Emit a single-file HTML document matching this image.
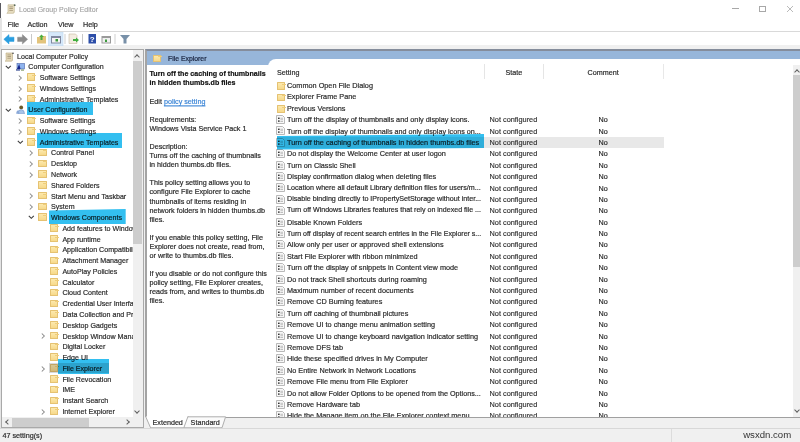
<!DOCTYPE html>
<html><head><meta charset="utf-8">
<style>
*{margin:0;padding:0;box-sizing:border-box}
html,body{width:800px;height:442px;overflow:hidden;background:#f0f0f0;font-family:"Liberation Sans",sans-serif;color:#222;position:relative}
.a{position:absolute}
.t{position:absolute;white-space:nowrap;font-size:7.2px;line-height:9px;color:#2a2a2a;-webkit-text-stroke:0.18px #2a2a2a;transform:scaleY(1.1)}
#top{left:0;top:0;width:800px;height:45px;background:#fff}
#edge{left:0;top:2.5px;width:1.4px;height:15px;background:#5a5a60}
#sep1{left:0;top:31px;width:800px;height:1px;background:#d9d9d9}
#lp{left:1px;top:49px;width:143px;height:379px;background:#fff;border:1px solid #a9a9a9;overflow:hidden}
#rp{left:145px;top:49px;width:655px;height:368px;background:#fff;border-left:2px solid #a4a4a4;border-top:2px solid #858d9c}
#band{left:147px;top:51px;width:653px;height:14px;background:#97b6da}
#tab{left:268px;top:59px;width:532px;height:10px;background:#fff;border-top-left-radius:8px}
.hl{position:absolute;background:#33bff0;mix-blend-mode:multiply}
.fold{position:absolute;width:8.5px;height:7.5px;background:linear-gradient(#fce9ae,#f7d98a);border:0.5px solid #e5c272;border-radius:0.5px}
.fold::before{content:"";position:absolute;left:4px;top:0.6px;width:4px;height:0.8px;background:#efcd7a}
.chev{position:absolute;width:4px;height:4px;border-right:1px solid #9a9a9a;border-bottom:1px solid #9a9a9a}
.ce{transform:rotate(-45deg)}
.cd{transform:rotate(45deg)}
.doc{position:absolute;width:7px;height:9px;border:1px solid #999;background:#f7f7f7}
.pol{position:absolute;width:7px;height:9px;background:#e8dcc0;border:1px solid #b9a982}
.comp{position:absolute;width:9px;height:8px;background:#3a5fb0}
.usr{position:absolute;width:9px;height:9px;background:#7c8fb0;border-radius:3px}
#status{left:0;top:428px;width:800px;height:14px;background:#f0f0f0;border-top:1px solid #d8d8d8}
#treeclip{left:2px;top:50px;width:130.5px;height:366px;overflow:hidden}
</style></head><body>
<div id="top" class="a"></div>
<div id="edge" class="a"></div>
<div id="sep1" class="a"></div>
<!-- title -->
<div class="a" style="left:0;top:17.5px;width:1.5px;height:410px;background:#e4e4e4"></div>
<svg class="a" style="left:6px;top:3.5px" width="10" height="10" viewBox="0 0 10 10"><path d="M2 0.8 H8.3 V8 Q8.3 9.3 7 9.3 H0.8 Q2 8.6 2 7.5 Z" fill="#e6dcc0" stroke="#bcae88" stroke-width="0.6"/><rect x="3.3" y="2.5" width="3.6" height="0.8" fill="#a09070"/><rect x="3.3" y="4.2" width="3.6" height="0.8" fill="#a09070"/><rect x="3.3" y="5.9" width="3.6" height="0.8" fill="#a09070"/><circle cx="8.7" cy="1.2" r="0.9" fill="#5a6a5a"/></svg>
<div class="t" style="left:19px;top:4.7px;color:#a0a0a0;-webkit-text-stroke:0.1px #a0a0a0;font-size:7px">Local Group Policy Editor</div>
<div class="a" style="left:732px;top:8.2px;width:7px;height:0.8px;background:#a8a8a8"></div>
<div class="a" style="left:759px;top:6px;width:6.5px;height:6px;border:0.8px solid #a8a8a8"></div>
<svg class="a" style="left:786px;top:5px" width="8" height="8" viewBox="0 0 8 8"><path d="M1 1 L7 7 M7 1 L1 7" stroke="#a8a8a8" stroke-width="0.8"/></svg>
<!-- menu -->
<div class="t" style="left:7.5px;top:20px">File</div>
<div class="t" style="left:27.5px;top:20px">Action</div>
<div class="t" style="left:58px;top:20px">View</div>
<div class="t" style="left:83px;top:20px">Help</div>


<!-- toolbar -->
<svg class="a" style="left:0;top:32px" width="140" height="14" viewBox="0 0 140 14">
 <path d="M3.8 7.3 L9 2.6 V5.2 H14 V9.4 H9 V12 Z" fill="#2a9ee0" stroke="#2a9ee0" stroke-width="0.5" stroke-linejoin="round"/>
 <path d="M27.6 7.3 L22.4 2.6 V5.2 H17.6 V9.4 H22.4 V12 Z" fill="#8c8c8c" stroke="#8c8c8c" stroke-width="0.5" stroke-linejoin="round"/>
 <rect x="31" y="2" width="1" height="10" fill="#c8c8c8"/>
 <path d="M37 5 H41 L42 4 H46 V11.5 H37 Z" fill="#e3c47c"/>
 <path d="M41.5 2.5 L44 5 H42.5 V8 H40.5 V5 H39 Z" fill="#4cae3c"/>
 <rect x="48.5" y="0.3" width="14.5" height="13.5" fill="#d6e8fa" stroke="#c0daf2" stroke-width="0.6"/>
 <rect x="51" y="4" width="10" height="7.5" fill="#8088a0"/>
 <rect x="52" y="6" width="8" height="4.5" fill="#f4f4f4"/>
 <rect x="55.5" y="7" width="2.5" height="2.5" fill="#3a9a3a"/>
 <rect x="64.5" y="2" width="1" height="10" fill="#d0d0d0"/>
 <path d="M69 2 H75.5 L77 3.5 V11.5 H69 Z" fill="#f3ece0" stroke="#c8b8a0" stroke-width="0.6"/>
 <path d="M73 7 H76 V5.5 L79 8 L76 10.5 V9 H73 Z" fill="#3fb03f"/>
 <rect x="82" y="2" width="1" height="10" fill="#c8c8c8"/>
 <rect x="88.5" y="2" width="7.5" height="9.5" fill="#2d4ea8"/>
 <text x="92.2" y="9.6" font-size="8" font-family="Liberation Sans" font-weight="bold" fill="#fff" text-anchor="middle">?</text>
 <rect x="101.5" y="4" width="9.5" height="7.5" fill="#9a9a9a"/>
 <rect x="102.5" y="6" width="7.5" height="4.5" fill="#f0f0f0"/>
 <rect x="105" y="7.5" width="2" height="2.5" fill="#3a9a3a"/>
 <rect x="114.5" y="2" width="1" height="10" fill="#d0d0d0"/>
 <path d="M120 3 H130 L126.5 7 V11.5 H123.5 V7 Z" fill="#7890a8"/>
</svg>
<div id="lp" class="a"></div>
<div id="treeclip" class="a">
<div class="a" style="left:-2px;top:-50px">
<svg class="a" style="left:4px;top:51.8px" width="10" height="10" viewBox="0 0 10 10"><path d="M2 1 H8.5 V8 Q8.5 9.2 7.3 9.2 H1.2 Q2.2 8.6 2.2 7.5 Z" fill="#e4d8b8" stroke="#b8a880" stroke-width="0.6"/><rect x="3.4" y="2.6" width="3.6" height="0.7" fill="#9a8a6a"/><rect x="3.4" y="4.2" width="3.6" height="0.7" fill="#9a8a6a"/><rect x="3.4" y="5.8" width="3.6" height="0.7" fill="#9a8a6a"/><circle cx="9" cy="1.2" r="0.8" fill="#444"/></svg>
<div class="t" style="left:17.00px;top:52.50px;font-size:7.1px">Local Computer Policy</div>
<svg class="a" style="left:5.35px;top:64.57px" width="7" height="5" viewBox="0 0 7 5"><path d="M0.8 0.8 L3.3 3.3 L5.8 0.8" fill="none" stroke="#3c3c3c" stroke-width="1.1"/></svg>
<svg class="a" style="left:16px;top:62.57px" width="9" height="8" viewBox="0 0 9 8"><rect x="1" y="0.5" width="7.5" height="5.5" fill="#8fb4ee" stroke="#4a64a8" stroke-width="0.6"/><path d="M1 6 L3.2 1 L4.5 6 Z" fill="#14248a"/><rect x="0" y="6" width="4" height="1.8" fill="#6a7ab0"/><rect x="5" y="6.5" width="3" height="1.2" fill="#8aa070"/></svg>
<div class="t" style="left:28.35px;top:63.27px;font-size:7.1px">Computer Configuration</div>
<svg class="a" style="left:18.10px;top:74.74px" width="5" height="7" viewBox="0 0 5 7"><path d="M0.8 0.5 L3.3 3 L0.8 5.5" fill="none" stroke="#888" stroke-width="1.05"/></svg>
<div class="fold" style="left:26.80px;top:73.44px"></div>
<div class="t" style="left:39.70px;top:74.04px;font-size:7.1px">Software Settings</div>
<svg class="a" style="left:18.10px;top:85.51px" width="5" height="7" viewBox="0 0 5 7"><path d="M0.8 0.5 L3.3 3 L0.8 5.5" fill="none" stroke="#888" stroke-width="1.05"/></svg>
<div class="fold" style="left:26.80px;top:84.21px"></div>
<div class="t" style="left:39.70px;top:84.81px;font-size:7.1px">Windows Settings</div>
<svg class="a" style="left:18.10px;top:96.28px" width="5" height="7" viewBox="0 0 5 7"><path d="M0.8 0.5 L3.3 3 L0.8 5.5" fill="none" stroke="#888" stroke-width="1.05"/></svg>
<div class="fold" style="left:26.80px;top:94.98px"></div>
<div class="t" style="left:39.70px;top:95.58px;font-size:7.1px">Administrative Templates</div>
<svg class="a" style="left:5.35px;top:107.65px" width="7" height="5" viewBox="0 0 7 5"><path d="M0.8 0.8 L3.3 3.3 L5.8 0.8" fill="none" stroke="#3c3c3c" stroke-width="1.1"/></svg>
<svg class="a" style="left:16px;top:105.25px" width="9" height="9" viewBox="0 0 9 9"><circle cx="5.2" cy="2.4" r="1.9" fill="#6a5a2a"/><path d="M2 8.8 Q2 4.8 5.2 4.6 Q8.5 4.8 8.5 8.8 Z" fill="#a8c4e8" stroke="#6a8ac0" stroke-width="0.5"/><path d="M0.2 8.8 Q0.2 5.5 2.6 5.2 L3.6 8.8 Z" fill="#8aa8d8"/></svg>
<div class="t" style="left:28.35px;top:106.35px;font-size:7.1px">User Configuration</div>
<svg class="a" style="left:18.10px;top:117.82px" width="5" height="7" viewBox="0 0 5 7"><path d="M0.8 0.5 L3.3 3 L0.8 5.5" fill="none" stroke="#888" stroke-width="1.05"/></svg>
<div class="fold" style="left:26.80px;top:116.52px"></div>
<div class="t" style="left:39.70px;top:117.12px;font-size:7.1px">Software Settings</div>
<svg class="a" style="left:18.10px;top:128.59px" width="5" height="7" viewBox="0 0 5 7"><path d="M0.8 0.5 L3.3 3 L0.8 5.5" fill="none" stroke="#888" stroke-width="1.05"/></svg>
<div class="fold" style="left:26.80px;top:127.29px"></div>
<div class="t" style="left:39.70px;top:127.89px;font-size:7.1px">Windows Settings</div>
<svg class="a" style="left:16.70px;top:139.96px" width="7" height="5" viewBox="0 0 7 5"><path d="M0.8 0.8 L3.3 3.3 L5.8 0.8" fill="none" stroke="#3c3c3c" stroke-width="1.1"/></svg>
<div class="fold" style="left:26.80px;top:138.06px"></div>
<div class="t" style="left:39.70px;top:138.66px;font-size:7.1px">Administrative Templates</div>
<svg class="a" style="left:29.45px;top:150.13px" width="5" height="7" viewBox="0 0 5 7"><path d="M0.8 0.5 L3.3 3 L0.8 5.5" fill="none" stroke="#888" stroke-width="1.05"/></svg>
<div class="fold" style="left:38.15px;top:148.83px"></div>
<div class="t" style="left:51.05px;top:149.43px;font-size:7.1px">Control Panel</div>
<svg class="a" style="left:29.45px;top:160.90px" width="5" height="7" viewBox="0 0 5 7"><path d="M0.8 0.5 L3.3 3 L0.8 5.5" fill="none" stroke="#888" stroke-width="1.05"/></svg>
<div class="fold" style="left:38.15px;top:159.60px"></div>
<div class="t" style="left:51.05px;top:160.20px;font-size:7.1px">Desktop</div>
<svg class="a" style="left:29.45px;top:171.67px" width="5" height="7" viewBox="0 0 5 7"><path d="M0.8 0.5 L3.3 3 L0.8 5.5" fill="none" stroke="#888" stroke-width="1.05"/></svg>
<div class="fold" style="left:38.15px;top:170.37px"></div>
<div class="t" style="left:51.05px;top:170.97px;font-size:7.1px">Network</div>
<div class="fold" style="left:38.15px;top:181.14px"></div>
<div class="t" style="left:51.05px;top:181.74px;font-size:7.1px">Shared Folders</div>
<svg class="a" style="left:29.45px;top:193.21px" width="5" height="7" viewBox="0 0 5 7"><path d="M0.8 0.5 L3.3 3 L0.8 5.5" fill="none" stroke="#888" stroke-width="1.05"/></svg>
<div class="fold" style="left:38.15px;top:191.91px"></div>
<div class="t" style="left:51.05px;top:192.51px;font-size:7.1px">Start Menu and Taskbar</div>
<svg class="a" style="left:29.45px;top:203.98px" width="5" height="7" viewBox="0 0 5 7"><path d="M0.8 0.5 L3.3 3 L0.8 5.5" fill="none" stroke="#888" stroke-width="1.05"/></svg>
<div class="fold" style="left:38.15px;top:202.68px"></div>
<div class="t" style="left:51.05px;top:203.28px;font-size:7.1px">System</div>
<svg class="a" style="left:28.05px;top:215.35px" width="7" height="5" viewBox="0 0 7 5"><path d="M0.8 0.8 L3.3 3.3 L5.8 0.8" fill="none" stroke="#3c3c3c" stroke-width="1.1"/></svg>
<div class="fold" style="left:38.15px;top:213.45px"></div>
<div class="t" style="left:51.05px;top:214.05px;font-size:7.1px">Windows Components</div>
<div class="fold" style="left:49.50px;top:224.22px"></div>
<div class="t" style="left:62.40px;top:224.82px;font-size:7.1px">Add features to Windows 10</div>
<div class="fold" style="left:49.50px;top:234.99px"></div>
<div class="t" style="left:62.40px;top:235.59px;font-size:7.1px">App runtime</div>
<div class="fold" style="left:49.50px;top:245.76px"></div>
<div class="t" style="left:62.40px;top:246.36px;font-size:7.1px">Application Compatibility</div>
<div class="fold" style="left:49.50px;top:256.53px"></div>
<div class="t" style="left:62.40px;top:257.13px;font-size:7.1px">Attachment Manager</div>
<div class="fold" style="left:49.50px;top:267.30px"></div>
<div class="t" style="left:62.40px;top:267.90px;font-size:7.1px">AutoPlay Policies</div>
<div class="fold" style="left:49.50px;top:278.07px"></div>
<div class="t" style="left:62.40px;top:278.67px;font-size:7.1px">Calculator</div>
<div class="fold" style="left:49.50px;top:288.84px"></div>
<div class="t" style="left:62.40px;top:289.44px;font-size:7.1px">Cloud Content</div>
<div class="fold" style="left:49.50px;top:299.61px"></div>
<div class="t" style="left:62.40px;top:300.21px;font-size:7.1px">Credential User Interface</div>
<div class="fold" style="left:49.50px;top:310.38px"></div>
<div class="t" style="left:62.40px;top:310.98px;font-size:7.1px">Data Collection and Preview Builds</div>
<div class="fold" style="left:49.50px;top:321.15px"></div>
<div class="t" style="left:62.40px;top:321.75px;font-size:7.1px">Desktop Gadgets</div>
<svg class="a" style="left:40.80px;top:333.22px" width="5" height="7" viewBox="0 0 5 7"><path d="M0.8 0.5 L3.3 3 L0.8 5.5" fill="none" stroke="#888" stroke-width="1.05"/></svg>
<div class="fold" style="left:49.50px;top:331.92px"></div>
<div class="t" style="left:62.40px;top:332.52px;font-size:7.1px">Desktop Window Manager</div>
<div class="fold" style="left:49.50px;top:342.69px"></div>
<div class="t" style="left:62.40px;top:343.29px;font-size:7.1px">Digital Locker</div>
<div class="fold" style="left:49.50px;top:353.46px"></div>
<div class="t" style="left:62.40px;top:354.06px;font-size:7.1px">Edge UI</div>
<svg class="a" style="left:40.80px;top:365.53px" width="5" height="7" viewBox="0 0 5 7"><path d="M0.8 0.5 L3.3 3 L0.8 5.5" fill="none" stroke="#888" stroke-width="1.05"/></svg>
<div class="fold" style="left:49.50px;top:364.23px"></div>
<div class="t" style="left:62.40px;top:364.83px;font-size:7.1px">File Explorer</div>
<div class="fold" style="left:49.50px;top:375.00px"></div>
<div class="t" style="left:62.40px;top:375.60px;font-size:7.1px">File Revocation</div>
<div class="fold" style="left:49.50px;top:385.77px"></div>
<div class="t" style="left:62.40px;top:386.37px;font-size:7.1px">IME</div>
<div class="fold" style="left:49.50px;top:396.54px"></div>
<div class="t" style="left:62.40px;top:397.14px;font-size:7.1px">Instant Search</div>
<svg class="a" style="left:40.80px;top:408.61px" width="5" height="7" viewBox="0 0 5 7"><path d="M0.8 0.5 L3.3 3 L0.8 5.5" fill="none" stroke="#888" stroke-width="1.05"/></svg>
<div class="fold" style="left:49.50px;top:407.31px"></div>
<div class="t" style="left:62.40px;top:407.91px;font-size:7.1px">Internet Explorer</div>
</div>
</div>
<div id="rp" class="a"></div>
<div id="band" class="a"></div>
<div id="tab" class="a"></div>
<div class="fold" style="left:152.5px;top:54.5px"></div>
<div class="t" style="left:168px;top:53.6px;font-size:6.85px;color:#1a2540;-webkit-text-stroke:0.2px #1a2540">File Explorer</div>
<div class="t" style="left:149.5px;top:69.60px;font-weight:bold;font-size:7.1px;color:#111;-webkit-text-stroke-color:#111">Turn off the caching of thumbnails</div>
<div class="t" style="left:149.5px;top:78.66px;font-weight:bold;font-size:7.1px;color:#111;-webkit-text-stroke-color:#111">in hidden thumbs.db files</div>
<div class="t" style="left:149.5px;top:97.08px">Edit <span style="color:#3a84d6;-webkit-text-stroke-color:#3a84d6;text-decoration:underline">policy setting</span></div>
<div class="t" style="left:149.5px;top:115.00px">Requirements:</div>
<div class="t" style="left:149.5px;top:124.06px">Windows Vista Service Pack 1</div>
<div class="t" style="left:149.5px;top:142.18px">Description:</div>
<div class="t" style="left:149.5px;top:151.24px">Turns off the caching of thumbnails</div>
<div class="t" style="left:149.5px;top:160.30px">in hidden thumbs.db files.</div>
<div class="t" style="left:149.5px;top:178.42px">This policy setting allows you to</div>
<div class="t" style="left:149.5px;top:187.48px">configure File Explorer to cache</div>
<div class="t" style="left:149.5px;top:196.54px">thumbnails of items residing in</div>
<div class="t" style="left:149.5px;top:205.60px">network folders in hidden thumbs.db</div>
<div class="t" style="left:149.5px;top:214.66px">files.</div>
<div class="t" style="left:149.5px;top:232.78px">If you enable this policy setting, File</div>
<div class="t" style="left:149.5px;top:241.84px">Explorer does not create, read from,</div>
<div class="t" style="left:149.5px;top:250.90px">or write to thumbs.db files.</div>
<div class="t" style="left:149.5px;top:269.02px">If you disable or do not configure this</div>
<div class="t" style="left:149.5px;top:278.08px">policy setting, File Explorer creates,</div>
<div class="t" style="left:149.5px;top:287.14px">reads from, and writes to thumbs.db</div>
<div class="t" style="left:149.5px;top:296.20px">files.</div>
<!-- header -->
<div class="t" style="left:277px;top:68px">Setting</div>
<div class="a" style="left:483.5px;top:64px;width:1px;height:15px;background:#e5e5e5"></div>
<div class="t" style="left:505.5px;top:68px">State</div>
<div class="a" style="left:543px;top:64px;width:1px;height:15px;background:#e5e5e5"></div>
<div class="t" style="left:587.5px;top:68px">Comment</div>
<div class="a" style="left:662.8px;top:64px;width:1px;height:15px;background:#e8e8e8"></div>
<div class="a" style="left:270px;top:65px;width:522px;height:352px;overflow:hidden">
<div class="a" style="left:-270px;top:-65px">
<div class="fold" style="left:276.5px;top:82.30px"></div>
<div class="t" style="left:287px;top:81.00px;font-size:7.3px">Common Open File Dialog</div>
<div class="fold" style="left:276.5px;top:93.69px"></div>
<div class="t" style="left:287px;top:92.39px;font-size:7.3px">Explorer Frame Pane</div>
<div class="fold" style="left:276.5px;top:105.08px"></div>
<div class="t" style="left:287px;top:103.78px;font-size:7.3px">Previous Versions</div>
<svg class="a" style="left:276px;top:115.07px" width="9" height="9" viewBox="0 0 9 9"><path d="M0.5 0.5H6.5L8.5 2.5V8.5H0.5Z" fill="#f8f8f8" stroke="#a8a8a8" stroke-width="0.8"/><rect x="2" y="2.6" width="1.6" height="1.4" fill="#333"/><rect x="2" y="5.4" width="1.6" height="1.4" fill="#333"/><rect x="4.4" y="2.8" width="2.6" height="0.8" fill="#b0b0b0"/><rect x="4.4" y="4.4" width="2.6" height="0.8" fill="#b0b0b0"/><rect x="4.4" y="6" width="2.6" height="0.8" fill="#b0b0b0"/></svg>
<div class="t" style="left:287px;top:115.17px;font-size:7.3px">Turn off the display of thumbnails and only display icons.</div>
<div class="t" style="left:489.5px;top:115.17px;font-size:7.35px;-webkit-text-stroke-width:0.12px">Not configured</div>
<div class="t" style="left:598.5px;top:115.17px">No</div>
<svg class="a" style="left:276px;top:126.46px" width="9" height="9" viewBox="0 0 9 9"><path d="M0.5 0.5H6.5L8.5 2.5V8.5H0.5Z" fill="#f8f8f8" stroke="#a8a8a8" stroke-width="0.8"/><rect x="2" y="2.6" width="1.6" height="1.4" fill="#333"/><rect x="2" y="5.4" width="1.6" height="1.4" fill="#333"/><rect x="4.4" y="2.8" width="2.6" height="0.8" fill="#b0b0b0"/><rect x="4.4" y="4.4" width="2.6" height="0.8" fill="#b0b0b0"/><rect x="4.4" y="6" width="2.6" height="0.8" fill="#b0b0b0"/></svg>
<div class="t" style="left:287px;top:126.56px;font-size:7.2px">Turn off the display of thumbnails and only display icons on...</div>
<div class="t" style="left:489.5px;top:126.56px;font-size:7.35px;-webkit-text-stroke-width:0.12px">Not configured</div>
<div class="t" style="left:598.5px;top:126.56px">No</div>
<div class="a" style="left:277px;top:137.15px;width:386.5px;height:11px;background:#e8e8e8"></div>
<svg class="a" style="left:276px;top:137.85px" width="9" height="9" viewBox="0 0 9 9"><path d="M0.5 0.5H6.5L8.5 2.5V8.5H0.5Z" fill="#f8f8f8" stroke="#a8a8a8" stroke-width="0.8"/><rect x="2" y="2.6" width="1.6" height="1.4" fill="#333"/><rect x="2" y="5.4" width="1.6" height="1.4" fill="#333"/><rect x="4.4" y="2.8" width="2.6" height="0.8" fill="#b0b0b0"/><rect x="4.4" y="4.4" width="2.6" height="0.8" fill="#b0b0b0"/><rect x="4.4" y="6" width="2.6" height="0.8" fill="#b0b0b0"/></svg>
<div class="t" style="left:287px;top:137.95px;font-size:7.3px">Turn off the caching of thumbnails in hidden thumbs.db files</div>
<div class="t" style="left:489.5px;top:137.95px;font-size:7.35px;-webkit-text-stroke-width:0.12px">Not configured</div>
<div class="t" style="left:598.5px;top:137.95px">No</div>
<svg class="a" style="left:276px;top:149.24px" width="9" height="9" viewBox="0 0 9 9"><path d="M0.5 0.5H6.5L8.5 2.5V8.5H0.5Z" fill="#f8f8f8" stroke="#a8a8a8" stroke-width="0.8"/><rect x="2" y="2.6" width="1.6" height="1.4" fill="#333"/><rect x="2" y="5.4" width="1.6" height="1.4" fill="#333"/><rect x="4.4" y="2.8" width="2.6" height="0.8" fill="#b0b0b0"/><rect x="4.4" y="4.4" width="2.6" height="0.8" fill="#b0b0b0"/><rect x="4.4" y="6" width="2.6" height="0.8" fill="#b0b0b0"/></svg>
<div class="t" style="left:287px;top:149.34px;font-size:7.3px">Do not display the Welcome Center at user logon</div>
<div class="t" style="left:489.5px;top:149.34px;font-size:7.35px;-webkit-text-stroke-width:0.12px">Not configured</div>
<div class="t" style="left:598.5px;top:149.34px">No</div>
<svg class="a" style="left:276px;top:160.63px" width="9" height="9" viewBox="0 0 9 9"><path d="M0.5 0.5H6.5L8.5 2.5V8.5H0.5Z" fill="#f8f8f8" stroke="#a8a8a8" stroke-width="0.8"/><rect x="2" y="2.6" width="1.6" height="1.4" fill="#333"/><rect x="2" y="5.4" width="1.6" height="1.4" fill="#333"/><rect x="4.4" y="2.8" width="2.6" height="0.8" fill="#b0b0b0"/><rect x="4.4" y="4.4" width="2.6" height="0.8" fill="#b0b0b0"/><rect x="4.4" y="6" width="2.6" height="0.8" fill="#b0b0b0"/></svg>
<div class="t" style="left:287px;top:160.73px;font-size:7.3px">Turn on Classic Shell</div>
<div class="t" style="left:489.5px;top:160.73px;font-size:7.35px;-webkit-text-stroke-width:0.12px">Not configured</div>
<div class="t" style="left:598.5px;top:160.73px">No</div>
<svg class="a" style="left:276px;top:172.02px" width="9" height="9" viewBox="0 0 9 9"><path d="M0.5 0.5H6.5L8.5 2.5V8.5H0.5Z" fill="#f8f8f8" stroke="#a8a8a8" stroke-width="0.8"/><rect x="2" y="2.6" width="1.6" height="1.4" fill="#333"/><rect x="2" y="5.4" width="1.6" height="1.4" fill="#333"/><rect x="4.4" y="2.8" width="2.6" height="0.8" fill="#b0b0b0"/><rect x="4.4" y="4.4" width="2.6" height="0.8" fill="#b0b0b0"/><rect x="4.4" y="6" width="2.6" height="0.8" fill="#b0b0b0"/></svg>
<div class="t" style="left:287px;top:172.12px;font-size:7.3px">Display confirmation dialog when deleting files</div>
<div class="t" style="left:489.5px;top:172.12px;font-size:7.35px;-webkit-text-stroke-width:0.12px">Not configured</div>
<div class="t" style="left:598.5px;top:172.12px">No</div>
<svg class="a" style="left:276px;top:183.41px" width="9" height="9" viewBox="0 0 9 9"><path d="M0.5 0.5H6.5L8.5 2.5V8.5H0.5Z" fill="#f8f8f8" stroke="#a8a8a8" stroke-width="0.8"/><rect x="2" y="2.6" width="1.6" height="1.4" fill="#333"/><rect x="2" y="5.4" width="1.6" height="1.4" fill="#333"/><rect x="4.4" y="2.8" width="2.6" height="0.8" fill="#b0b0b0"/><rect x="4.4" y="4.4" width="2.6" height="0.8" fill="#b0b0b0"/><rect x="4.4" y="6" width="2.6" height="0.8" fill="#b0b0b0"/></svg>
<div class="t" style="left:287px;top:183.51px;font-size:7.15px">Location where all default Library definition files for users/m...</div>
<div class="t" style="left:489.5px;top:183.51px;font-size:7.35px;-webkit-text-stroke-width:0.12px">Not configured</div>
<div class="t" style="left:598.5px;top:183.51px">No</div>
<svg class="a" style="left:276px;top:194.80px" width="9" height="9" viewBox="0 0 9 9"><path d="M0.5 0.5H6.5L8.5 2.5V8.5H0.5Z" fill="#f8f8f8" stroke="#a8a8a8" stroke-width="0.8"/><rect x="2" y="2.6" width="1.6" height="1.4" fill="#333"/><rect x="2" y="5.4" width="1.6" height="1.4" fill="#333"/><rect x="4.4" y="2.8" width="2.6" height="0.8" fill="#b0b0b0"/><rect x="4.4" y="4.4" width="2.6" height="0.8" fill="#b0b0b0"/><rect x="4.4" y="6" width="2.6" height="0.8" fill="#b0b0b0"/></svg>
<div class="t" style="left:287px;top:194.90px;font-size:7.15px">Disable binding directly to IPropertySetStorage without inter...</div>
<div class="t" style="left:489.5px;top:194.90px;font-size:7.35px;-webkit-text-stroke-width:0.12px">Not configured</div>
<div class="t" style="left:598.5px;top:194.90px">No</div>
<svg class="a" style="left:276px;top:206.19px" width="9" height="9" viewBox="0 0 9 9"><path d="M0.5 0.5H6.5L8.5 2.5V8.5H0.5Z" fill="#f8f8f8" stroke="#a8a8a8" stroke-width="0.8"/><rect x="2" y="2.6" width="1.6" height="1.4" fill="#333"/><rect x="2" y="5.4" width="1.6" height="1.4" fill="#333"/><rect x="4.4" y="2.8" width="2.6" height="0.8" fill="#b0b0b0"/><rect x="4.4" y="4.4" width="2.6" height="0.8" fill="#b0b0b0"/><rect x="4.4" y="6" width="2.6" height="0.8" fill="#b0b0b0"/></svg>
<div class="t" style="left:287px;top:206.29px;font-size:7.08px">Turn off Windows Libraries features that rely on indexed file ...</div>
<div class="t" style="left:489.5px;top:206.29px;font-size:7.35px;-webkit-text-stroke-width:0.12px">Not configured</div>
<div class="t" style="left:598.5px;top:206.29px">No</div>
<svg class="a" style="left:276px;top:217.58px" width="9" height="9" viewBox="0 0 9 9"><path d="M0.5 0.5H6.5L8.5 2.5V8.5H0.5Z" fill="#f8f8f8" stroke="#a8a8a8" stroke-width="0.8"/><rect x="2" y="2.6" width="1.6" height="1.4" fill="#333"/><rect x="2" y="5.4" width="1.6" height="1.4" fill="#333"/><rect x="4.4" y="2.8" width="2.6" height="0.8" fill="#b0b0b0"/><rect x="4.4" y="4.4" width="2.6" height="0.8" fill="#b0b0b0"/><rect x="4.4" y="6" width="2.6" height="0.8" fill="#b0b0b0"/></svg>
<div class="t" style="left:287px;top:217.68px;font-size:7.3px">Disable Known Folders</div>
<div class="t" style="left:489.5px;top:217.68px;font-size:7.35px;-webkit-text-stroke-width:0.12px">Not configured</div>
<div class="t" style="left:598.5px;top:217.68px">No</div>
<svg class="a" style="left:276px;top:228.97px" width="9" height="9" viewBox="0 0 9 9"><path d="M0.5 0.5H6.5L8.5 2.5V8.5H0.5Z" fill="#f8f8f8" stroke="#a8a8a8" stroke-width="0.8"/><rect x="2" y="2.6" width="1.6" height="1.4" fill="#333"/><rect x="2" y="5.4" width="1.6" height="1.4" fill="#333"/><rect x="4.4" y="2.8" width="2.6" height="0.8" fill="#b0b0b0"/><rect x="4.4" y="4.4" width="2.6" height="0.8" fill="#b0b0b0"/><rect x="4.4" y="6" width="2.6" height="0.8" fill="#b0b0b0"/></svg>
<div class="t" style="left:287px;top:229.07px;font-size:7.0px">Turn off display of recent search entries in the File Explorer s...</div>
<div class="t" style="left:489.5px;top:229.07px;font-size:7.35px;-webkit-text-stroke-width:0.12px">Not configured</div>
<div class="t" style="left:598.5px;top:229.07px">No</div>
<svg class="a" style="left:276px;top:240.36px" width="9" height="9" viewBox="0 0 9 9"><path d="M0.5 0.5H6.5L8.5 2.5V8.5H0.5Z" fill="#f8f8f8" stroke="#a8a8a8" stroke-width="0.8"/><rect x="2" y="2.6" width="1.6" height="1.4" fill="#333"/><rect x="2" y="5.4" width="1.6" height="1.4" fill="#333"/><rect x="4.4" y="2.8" width="2.6" height="0.8" fill="#b0b0b0"/><rect x="4.4" y="4.4" width="2.6" height="0.8" fill="#b0b0b0"/><rect x="4.4" y="6" width="2.6" height="0.8" fill="#b0b0b0"/></svg>
<div class="t" style="left:287px;top:240.46px;font-size:7.3px">Allow only per user or approved shell extensions</div>
<div class="t" style="left:489.5px;top:240.46px;font-size:7.35px;-webkit-text-stroke-width:0.12px">Not configured</div>
<div class="t" style="left:598.5px;top:240.46px">No</div>
<svg class="a" style="left:276px;top:251.75px" width="9" height="9" viewBox="0 0 9 9"><path d="M0.5 0.5H6.5L8.5 2.5V8.5H0.5Z" fill="#f8f8f8" stroke="#a8a8a8" stroke-width="0.8"/><rect x="2" y="2.6" width="1.6" height="1.4" fill="#333"/><rect x="2" y="5.4" width="1.6" height="1.4" fill="#333"/><rect x="4.4" y="2.8" width="2.6" height="0.8" fill="#b0b0b0"/><rect x="4.4" y="4.4" width="2.6" height="0.8" fill="#b0b0b0"/><rect x="4.4" y="6" width="2.6" height="0.8" fill="#b0b0b0"/></svg>
<div class="t" style="left:287px;top:251.85px;font-size:7.3px">Start File Explorer with ribbon minimized</div>
<div class="t" style="left:489.5px;top:251.85px;font-size:7.35px;-webkit-text-stroke-width:0.12px">Not configured</div>
<div class="t" style="left:598.5px;top:251.85px">No</div>
<svg class="a" style="left:276px;top:263.14px" width="9" height="9" viewBox="0 0 9 9"><path d="M0.5 0.5H6.5L8.5 2.5V8.5H0.5Z" fill="#f8f8f8" stroke="#a8a8a8" stroke-width="0.8"/><rect x="2" y="2.6" width="1.6" height="1.4" fill="#333"/><rect x="2" y="5.4" width="1.6" height="1.4" fill="#333"/><rect x="4.4" y="2.8" width="2.6" height="0.8" fill="#b0b0b0"/><rect x="4.4" y="4.4" width="2.6" height="0.8" fill="#b0b0b0"/><rect x="4.4" y="6" width="2.6" height="0.8" fill="#b0b0b0"/></svg>
<div class="t" style="left:287px;top:263.24px;font-size:7.3px">Turn off the display of snippets in Content view mode</div>
<div class="t" style="left:489.5px;top:263.24px;font-size:7.35px;-webkit-text-stroke-width:0.12px">Not configured</div>
<div class="t" style="left:598.5px;top:263.24px">No</div>
<svg class="a" style="left:276px;top:274.53px" width="9" height="9" viewBox="0 0 9 9"><path d="M0.5 0.5H6.5L8.5 2.5V8.5H0.5Z" fill="#f8f8f8" stroke="#a8a8a8" stroke-width="0.8"/><rect x="2" y="2.6" width="1.6" height="1.4" fill="#333"/><rect x="2" y="5.4" width="1.6" height="1.4" fill="#333"/><rect x="4.4" y="2.8" width="2.6" height="0.8" fill="#b0b0b0"/><rect x="4.4" y="4.4" width="2.6" height="0.8" fill="#b0b0b0"/><rect x="4.4" y="6" width="2.6" height="0.8" fill="#b0b0b0"/></svg>
<div class="t" style="left:287px;top:274.63px;font-size:7.3px">Do not track Shell shortcuts during roaming</div>
<div class="t" style="left:489.5px;top:274.63px;font-size:7.35px;-webkit-text-stroke-width:0.12px">Not configured</div>
<div class="t" style="left:598.5px;top:274.63px">No</div>
<svg class="a" style="left:276px;top:285.92px" width="9" height="9" viewBox="0 0 9 9"><path d="M0.5 0.5H6.5L8.5 2.5V8.5H0.5Z" fill="#f8f8f8" stroke="#a8a8a8" stroke-width="0.8"/><rect x="2" y="2.6" width="1.6" height="1.4" fill="#333"/><rect x="2" y="5.4" width="1.6" height="1.4" fill="#333"/><rect x="4.4" y="2.8" width="2.6" height="0.8" fill="#b0b0b0"/><rect x="4.4" y="4.4" width="2.6" height="0.8" fill="#b0b0b0"/><rect x="4.4" y="6" width="2.6" height="0.8" fill="#b0b0b0"/></svg>
<div class="t" style="left:287px;top:286.02px;font-size:7.3px">Maximum number of recent documents</div>
<div class="t" style="left:489.5px;top:286.02px;font-size:7.35px;-webkit-text-stroke-width:0.12px">Not configured</div>
<div class="t" style="left:598.5px;top:286.02px">No</div>
<svg class="a" style="left:276px;top:297.31px" width="9" height="9" viewBox="0 0 9 9"><path d="M0.5 0.5H6.5L8.5 2.5V8.5H0.5Z" fill="#f8f8f8" stroke="#a8a8a8" stroke-width="0.8"/><rect x="2" y="2.6" width="1.6" height="1.4" fill="#333"/><rect x="2" y="5.4" width="1.6" height="1.4" fill="#333"/><rect x="4.4" y="2.8" width="2.6" height="0.8" fill="#b0b0b0"/><rect x="4.4" y="4.4" width="2.6" height="0.8" fill="#b0b0b0"/><rect x="4.4" y="6" width="2.6" height="0.8" fill="#b0b0b0"/></svg>
<div class="t" style="left:287px;top:297.41px;font-size:7.3px">Remove CD Burning features</div>
<div class="t" style="left:489.5px;top:297.41px;font-size:7.35px;-webkit-text-stroke-width:0.12px">Not configured</div>
<div class="t" style="left:598.5px;top:297.41px">No</div>
<svg class="a" style="left:276px;top:308.70px" width="9" height="9" viewBox="0 0 9 9"><path d="M0.5 0.5H6.5L8.5 2.5V8.5H0.5Z" fill="#f8f8f8" stroke="#a8a8a8" stroke-width="0.8"/><rect x="2" y="2.6" width="1.6" height="1.4" fill="#333"/><rect x="2" y="5.4" width="1.6" height="1.4" fill="#333"/><rect x="4.4" y="2.8" width="2.6" height="0.8" fill="#b0b0b0"/><rect x="4.4" y="4.4" width="2.6" height="0.8" fill="#b0b0b0"/><rect x="4.4" y="6" width="2.6" height="0.8" fill="#b0b0b0"/></svg>
<div class="t" style="left:287px;top:308.80px;font-size:7.3px">Turn off caching of thumbnail pictures</div>
<div class="t" style="left:489.5px;top:308.80px;font-size:7.35px;-webkit-text-stroke-width:0.12px">Not configured</div>
<div class="t" style="left:598.5px;top:308.80px">No</div>
<svg class="a" style="left:276px;top:320.09px" width="9" height="9" viewBox="0 0 9 9"><path d="M0.5 0.5H6.5L8.5 2.5V8.5H0.5Z" fill="#f8f8f8" stroke="#a8a8a8" stroke-width="0.8"/><rect x="2" y="2.6" width="1.6" height="1.4" fill="#333"/><rect x="2" y="5.4" width="1.6" height="1.4" fill="#333"/><rect x="4.4" y="2.8" width="2.6" height="0.8" fill="#b0b0b0"/><rect x="4.4" y="4.4" width="2.6" height="0.8" fill="#b0b0b0"/><rect x="4.4" y="6" width="2.6" height="0.8" fill="#b0b0b0"/></svg>
<div class="t" style="left:287px;top:320.19px;font-size:7.3px">Remove UI to change menu animation setting</div>
<div class="t" style="left:489.5px;top:320.19px;font-size:7.35px;-webkit-text-stroke-width:0.12px">Not configured</div>
<div class="t" style="left:598.5px;top:320.19px">No</div>
<svg class="a" style="left:276px;top:331.48px" width="9" height="9" viewBox="0 0 9 9"><path d="M0.5 0.5H6.5L8.5 2.5V8.5H0.5Z" fill="#f8f8f8" stroke="#a8a8a8" stroke-width="0.8"/><rect x="2" y="2.6" width="1.6" height="1.4" fill="#333"/><rect x="2" y="5.4" width="1.6" height="1.4" fill="#333"/><rect x="4.4" y="2.8" width="2.6" height="0.8" fill="#b0b0b0"/><rect x="4.4" y="4.4" width="2.6" height="0.8" fill="#b0b0b0"/><rect x="4.4" y="6" width="2.6" height="0.8" fill="#b0b0b0"/></svg>
<div class="t" style="left:287px;top:331.58px;font-size:7.3px">Remove UI to change keyboard navigation indicator setting</div>
<div class="t" style="left:489.5px;top:331.58px;font-size:7.35px;-webkit-text-stroke-width:0.12px">Not configured</div>
<div class="t" style="left:598.5px;top:331.58px">No</div>
<svg class="a" style="left:276px;top:342.87px" width="9" height="9" viewBox="0 0 9 9"><path d="M0.5 0.5H6.5L8.5 2.5V8.5H0.5Z" fill="#f8f8f8" stroke="#a8a8a8" stroke-width="0.8"/><rect x="2" y="2.6" width="1.6" height="1.4" fill="#333"/><rect x="2" y="5.4" width="1.6" height="1.4" fill="#333"/><rect x="4.4" y="2.8" width="2.6" height="0.8" fill="#b0b0b0"/><rect x="4.4" y="4.4" width="2.6" height="0.8" fill="#b0b0b0"/><rect x="4.4" y="6" width="2.6" height="0.8" fill="#b0b0b0"/></svg>
<div class="t" style="left:287px;top:342.97px;font-size:7.3px">Remove DFS tab</div>
<div class="t" style="left:489.5px;top:342.97px;font-size:7.35px;-webkit-text-stroke-width:0.12px">Not configured</div>
<div class="t" style="left:598.5px;top:342.97px">No</div>
<svg class="a" style="left:276px;top:354.26px" width="9" height="9" viewBox="0 0 9 9"><path d="M0.5 0.5H6.5L8.5 2.5V8.5H0.5Z" fill="#f8f8f8" stroke="#a8a8a8" stroke-width="0.8"/><rect x="2" y="2.6" width="1.6" height="1.4" fill="#333"/><rect x="2" y="5.4" width="1.6" height="1.4" fill="#333"/><rect x="4.4" y="2.8" width="2.6" height="0.8" fill="#b0b0b0"/><rect x="4.4" y="4.4" width="2.6" height="0.8" fill="#b0b0b0"/><rect x="4.4" y="6" width="2.6" height="0.8" fill="#b0b0b0"/></svg>
<div class="t" style="left:287px;top:354.36px;font-size:7.3px">Hide these specified drives in My Computer</div>
<div class="t" style="left:489.5px;top:354.36px;font-size:7.35px;-webkit-text-stroke-width:0.12px">Not configured</div>
<div class="t" style="left:598.5px;top:354.36px">No</div>
<svg class="a" style="left:276px;top:365.65px" width="9" height="9" viewBox="0 0 9 9"><path d="M0.5 0.5H6.5L8.5 2.5V8.5H0.5Z" fill="#f8f8f8" stroke="#a8a8a8" stroke-width="0.8"/><rect x="2" y="2.6" width="1.6" height="1.4" fill="#333"/><rect x="2" y="5.4" width="1.6" height="1.4" fill="#333"/><rect x="4.4" y="2.8" width="2.6" height="0.8" fill="#b0b0b0"/><rect x="4.4" y="4.4" width="2.6" height="0.8" fill="#b0b0b0"/><rect x="4.4" y="6" width="2.6" height="0.8" fill="#b0b0b0"/></svg>
<div class="t" style="left:287px;top:365.75px;font-size:7.3px">No Entire Network in Network Locations</div>
<div class="t" style="left:489.5px;top:365.75px;font-size:7.35px;-webkit-text-stroke-width:0.12px">Not configured</div>
<div class="t" style="left:598.5px;top:365.75px">No</div>
<svg class="a" style="left:276px;top:377.04px" width="9" height="9" viewBox="0 0 9 9"><path d="M0.5 0.5H6.5L8.5 2.5V8.5H0.5Z" fill="#f8f8f8" stroke="#a8a8a8" stroke-width="0.8"/><rect x="2" y="2.6" width="1.6" height="1.4" fill="#333"/><rect x="2" y="5.4" width="1.6" height="1.4" fill="#333"/><rect x="4.4" y="2.8" width="2.6" height="0.8" fill="#b0b0b0"/><rect x="4.4" y="4.4" width="2.6" height="0.8" fill="#b0b0b0"/><rect x="4.4" y="6" width="2.6" height="0.8" fill="#b0b0b0"/></svg>
<div class="t" style="left:287px;top:377.14px;font-size:7.3px">Remove File menu from File Explorer</div>
<div class="t" style="left:489.5px;top:377.14px;font-size:7.35px;-webkit-text-stroke-width:0.12px">Not configured</div>
<div class="t" style="left:598.5px;top:377.14px">No</div>
<svg class="a" style="left:276px;top:388.43px" width="9" height="9" viewBox="0 0 9 9"><path d="M0.5 0.5H6.5L8.5 2.5V8.5H0.5Z" fill="#f8f8f8" stroke="#a8a8a8" stroke-width="0.8"/><rect x="2" y="2.6" width="1.6" height="1.4" fill="#333"/><rect x="2" y="5.4" width="1.6" height="1.4" fill="#333"/><rect x="4.4" y="2.8" width="2.6" height="0.8" fill="#b0b0b0"/><rect x="4.4" y="4.4" width="2.6" height="0.8" fill="#b0b0b0"/><rect x="4.4" y="6" width="2.6" height="0.8" fill="#b0b0b0"/></svg>
<div class="t" style="left:287px;top:388.53px;font-size:7.2px">Do not allow Folder Options to be opened from the Options...</div>
<div class="t" style="left:489.5px;top:388.53px;font-size:7.35px;-webkit-text-stroke-width:0.12px">Not configured</div>
<div class="t" style="left:598.5px;top:388.53px">No</div>
<svg class="a" style="left:276px;top:399.82px" width="9" height="9" viewBox="0 0 9 9"><path d="M0.5 0.5H6.5L8.5 2.5V8.5H0.5Z" fill="#f8f8f8" stroke="#a8a8a8" stroke-width="0.8"/><rect x="2" y="2.6" width="1.6" height="1.4" fill="#333"/><rect x="2" y="5.4" width="1.6" height="1.4" fill="#333"/><rect x="4.4" y="2.8" width="2.6" height="0.8" fill="#b0b0b0"/><rect x="4.4" y="4.4" width="2.6" height="0.8" fill="#b0b0b0"/><rect x="4.4" y="6" width="2.6" height="0.8" fill="#b0b0b0"/></svg>
<div class="t" style="left:287px;top:399.92px;font-size:7.3px">Remove Hardware tab</div>
<div class="t" style="left:489.5px;top:399.92px;font-size:7.35px;-webkit-text-stroke-width:0.12px">Not configured</div>
<div class="t" style="left:598.5px;top:399.92px">No</div>
<svg class="a" style="left:276px;top:411.21px" width="9" height="9" viewBox="0 0 9 9"><path d="M0.5 0.5H6.5L8.5 2.5V8.5H0.5Z" fill="#f8f8f8" stroke="#a8a8a8" stroke-width="0.8"/><rect x="2" y="2.6" width="1.6" height="1.4" fill="#333"/><rect x="2" y="5.4" width="1.6" height="1.4" fill="#333"/><rect x="4.4" y="2.8" width="2.6" height="0.8" fill="#b0b0b0"/><rect x="4.4" y="4.4" width="2.6" height="0.8" fill="#b0b0b0"/><rect x="4.4" y="6" width="2.6" height="0.8" fill="#b0b0b0"/></svg>
<div class="t" style="left:287px;top:411.31px;font-size:7.3px">Hide the Manage item on the File Explorer context menu</div>
<div class="t" style="left:489.5px;top:411.31px;font-size:7.35px;-webkit-text-stroke-width:0.12px">Not configured</div>
<div class="t" style="left:598.5px;top:411.31px">No</div>
</div>
</div>

<!-- left scrollbars -->
<div class="a" style="left:48.7px;top:363px;width:60px;height:10px;background:#d9d9d9;mix-blend-mode:multiply"></div>
<div class="a" style="left:132.8px;top:50px;width:10.2px;height:367px;background:#f0f0f0"></div>
<div class="a" style="left:133px;top:60.5px;width:9.2px;height:183.5px;background:#cdcdcd"></div>
<div class="chev" style="left:135.3px;top:55px;transform:rotate(225deg);border-color:#606060"></div>
<div class="chev" style="left:135.3px;top:409px;transform:rotate(45deg);border-color:#606060"></div>
<div class="a" style="left:2px;top:417px;width:141px;height:10px;background:#f0f0f0"></div>
<div class="a" style="left:12.3px;top:417.5px;width:76.5px;height:9px;background:#cdcdcd"></div>
<div class="chev" style="left:6px;top:420px;transform:rotate(135deg);border-color:#606060"></div>
<div class="chev" style="left:125px;top:420px;transform:rotate(-45deg);border-color:#606060"></div>
<!-- right scrollbar -->
<div class="a" style="left:792.8px;top:65px;width:7.2px;height:352px;background:#f0f0f0"></div>
<div class="a" style="left:793px;top:75px;width:7px;height:191.7px;background:#cdcdcd"></div>
<div class="chev" style="left:795px;top:69.5px;transform:rotate(225deg);border-color:#606060"></div>
<div class="chev" style="left:795px;top:407.5px;transform:rotate(45deg);border-color:#606060"></div>
<!-- tabs -->
<svg class="a" style="left:140px;top:412px" width="100" height="20" viewBox="0 0 100 20">
 <path d="M44 4.6 H85.8 L82 15.8 H44 Z" fill="#fbfbfb"/>
 <path d="M47.5 4.8 H85.6 L82 15.8 H44" fill="none" stroke="#9a9a9a" stroke-width="0.8"/>
 <path d="M5.6 4.4 L10.6 15.8 H43.8 L48 4.4 Z" fill="#fff"/>
 <path d="M5.6 4.4 L10.6 15.8 H43.8 L48 4.4" fill="none" stroke="#9a9a9a" stroke-width="0.8"/>
</svg>
<div class="a" style="left:225.6px;top:416.6px;width:575px;height:1px;background:#a0a0a0"></div>
<div class="t" style="left:152.5px;top:418px">Extended</div>
<div class="t" style="left:190.6px;top:418px">Standard</div>
<!-- highlights -->
<div class="hl" style="left:26.8px;top:101.5px;width:66px;height:13.8px"></div>
<div class="hl" style="left:36.6px;top:133.2px;width:85.3px;height:14.6px"></div>
<div class="hl" style="left:48.5px;top:209px;width:77.2px;height:15px;clip-path:polygon(0 1.5px,100% 0,100% 100%,0 100%)"></div>
<div class="hl" style="left:58px;top:358.8px;width:50.8px;height:15px"></div>
<div class="hl" style="left:277px;top:134px;width:207px;height:15.5px;clip-path:polygon(0 2px,100% 0,100% 14px,0 100%)"></div>
<div id="status" class="a"></div>
<div class="a" style="left:671px;top:429px;width:1px;height:13px;background:#dcdcdc"></div>
<div class="t" style="left:2.5px;top:430.8px">47 setting(s)</div>
<div class="t" style="left:743.2px;top:429.8px;font-size:9.6px;color:#333;-webkit-text-stroke:0;transform:none">wsxdn.com</div>
</body></html>
